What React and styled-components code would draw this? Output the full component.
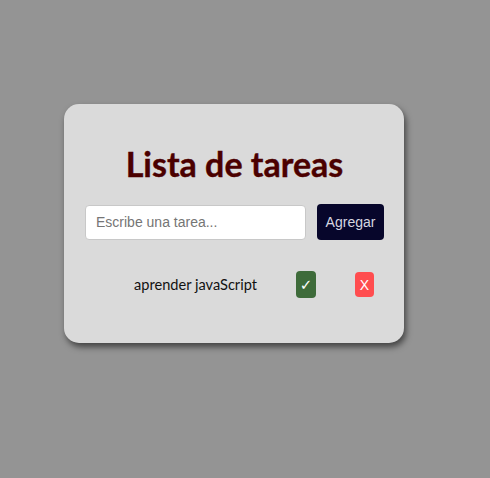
import React from "react";
import styled, { createGlobalStyle } from "styled-components";

const Global = createGlobalStyle`
  html, body { margin: 0; padding: 0; }
  body { background: #949494; font-family: Lato, "Open Sans", sans-serif; }
`;

const Page = styled.div`
  min-height: 478px;
  padding: 104px 0 0 64px;
  box-sizing: border-box;
`;

const Card = styled.div`
  width: 340px;
  height: 239px;
  box-sizing: border-box;
  background: #dadada;
  border-radius: 15px;
  box-shadow: 2px 4px 6px rgba(0, 0, 0, 0.55);
  padding: 40px 20px 0 21px;
  display: flex;
  flex-direction: column;
`;

const Title = styled.h1`
  margin: 0;
  font-family: Lato, sans-serif;
  font-weight: 700;
  font-size: 34px;
  line-height: 40px;
  color: #4b0000;
  text-align: center;
  -webkit-text-stroke: 0.4px #4b0000;
`;

const Form = styled.div`
  display: flex;
  align-items: center;
  gap: 11px;
  margin-top: 20px;
`;

const Input = styled.input`
  flex: 1;
  height: 35px;
  box-sizing: border-box;
  border: 1px solid #c8c8c8;
  border-radius: 4px;
  background: #fff;
  padding: 0 10px;
  font-family: "Liberation Sans", Arial, sans-serif;
  font-size: 14px;
  outline: none;
  &::placeholder { color: #757575; }
`;

const AddButton = styled.button`
  height: 36px;
  width: 67px;
  border: none;
  border-radius: 4px;
  background: #07062b;
  color: #d6d6e0;
  font-family: "Liberation Sans", Arial, sans-serif;
  font-size: 14px;
  padding: 0;
  cursor: pointer;
`;

const List = styled.ul`
  list-style: none;
  margin: 31px 0 0;
  padding: 0 10px 0 49px;
`;

const Item = styled.li`
  display: flex;
  align-items: center;
  justify-content: space-between;
`;

const TaskText = styled.span`
  font-family: Lato, sans-serif;
  font-size: 14.6px;
  color: #111;
`;

const IconButton = styled.button`
  border: none;
  border-radius: 4px;
  background: ${(p) => p.$bg};
  color: #fff;
  width: ${(p) => p.$w}px;
  height: ${(p) => p.$h}px;
  padding: 0;
  font-family: ${(p) => p.$font};
  font-size: ${(p) => p.$fs}px;
  display: flex;
  align-items: center;
  justify-content: center;
  cursor: pointer;
`;

export default function App() {
  return (
    <>
      <Global />
      <Page>
        <Card>
          <Title>Lista de tareas</Title>
          <Form>
            <Input placeholder="Escribe una tarea..." />
            <AddButton>Agregar</AddButton>
          </Form>
          <List>
            <Item>
              <TaskText>aprender javaScript</TaskText>
              <IconButton $bg="#3e6b3a" $w={20} $h={27} $fs={15} $font={'"DejaVu Sans", sans-serif'}>✓</IconButton>
              <IconButton $bg="#ff4d4f" $w={19} $h={25} $fs={14} $font={'"Liberation Sans", sans-serif'}>X</IconButton>
            </Item>
          </List>
        </Card>
      </Page>
    </>
  );
}
